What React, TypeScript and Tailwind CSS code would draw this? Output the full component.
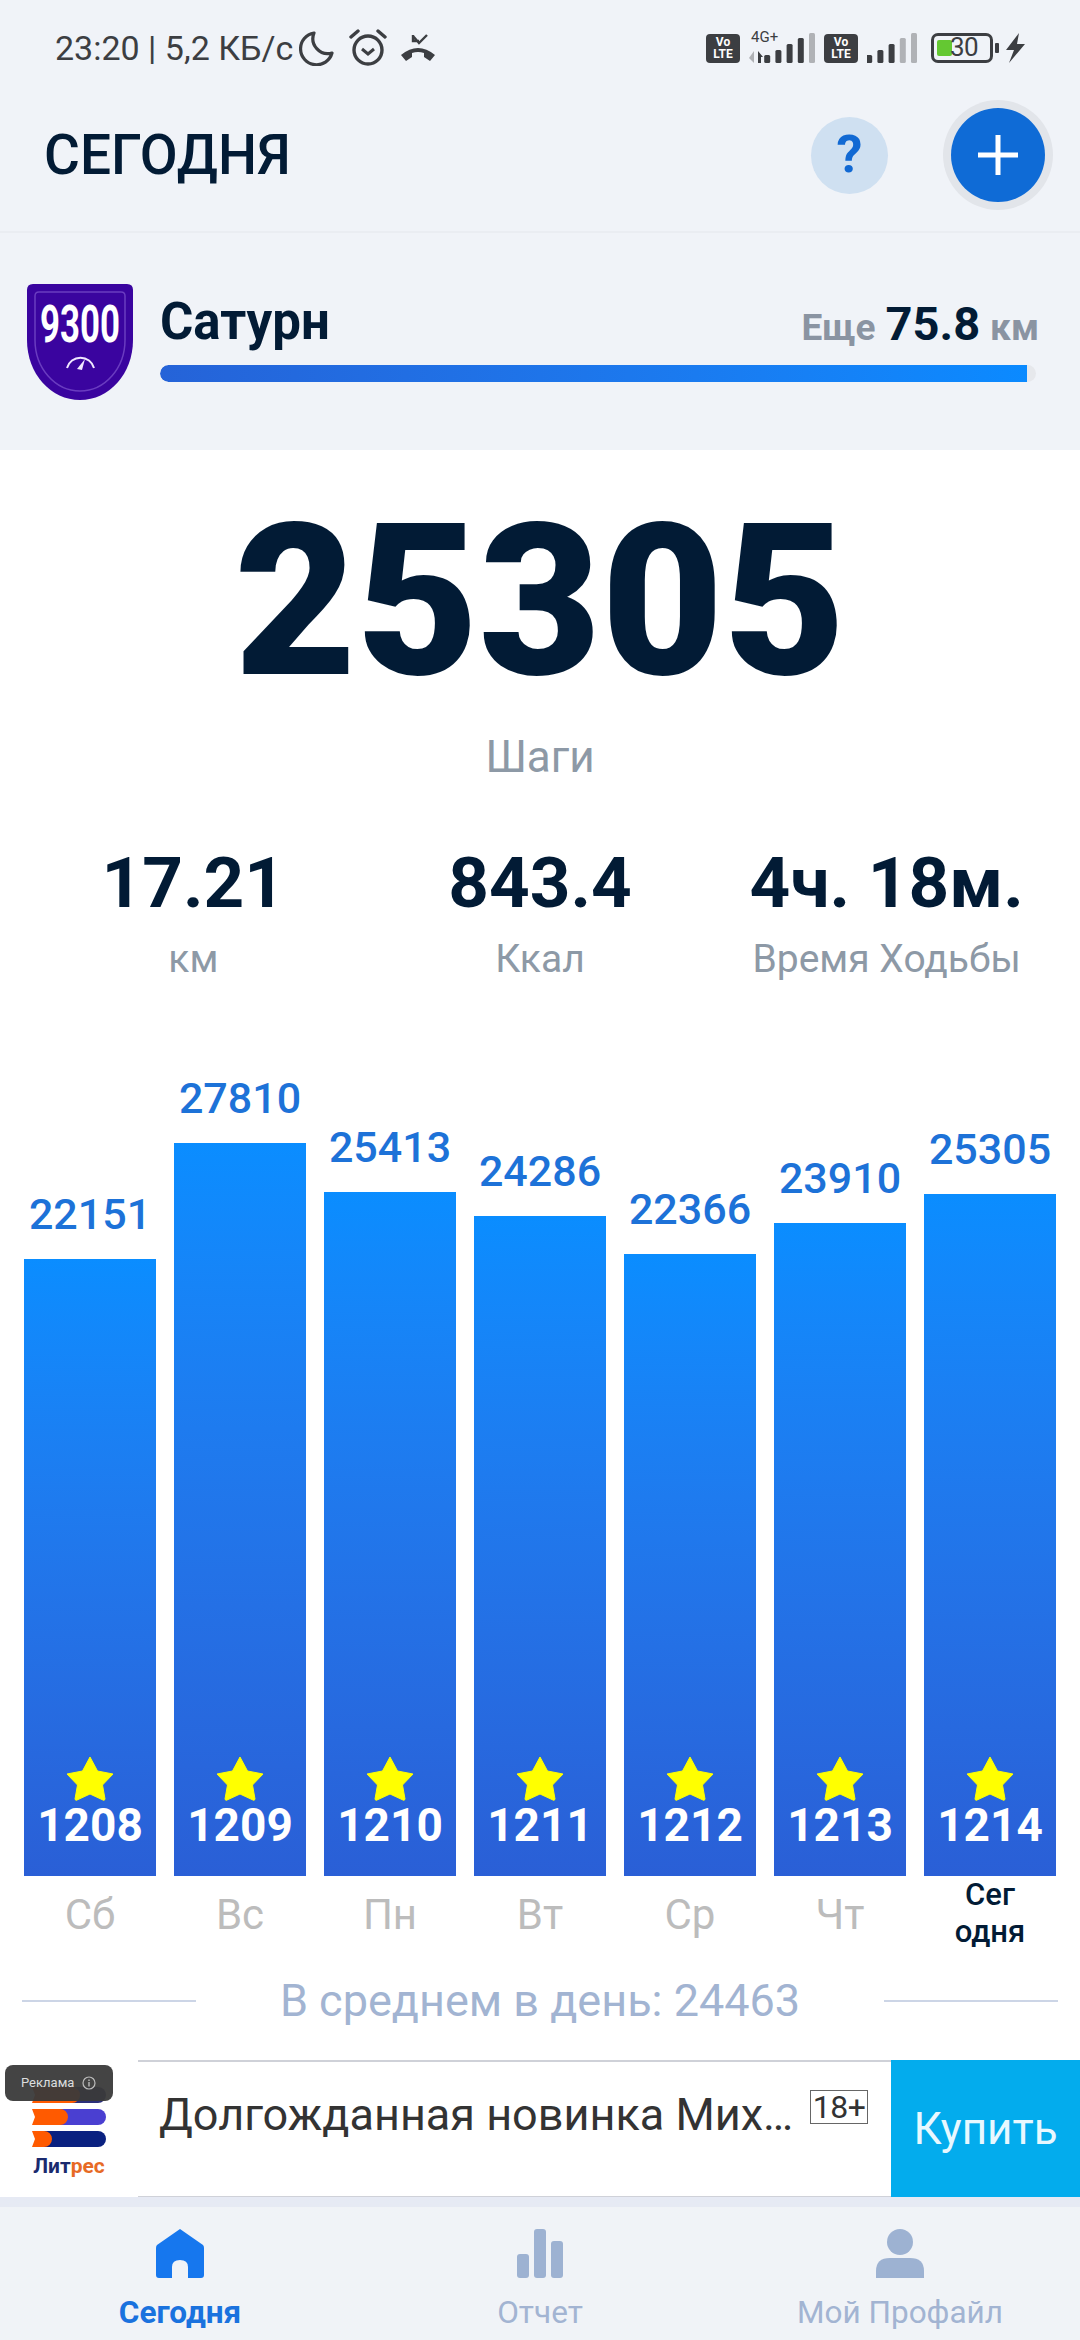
import React from "react";

const bars = [
  { v: 22151, n: 1208, d: "Сб", h: 617 },
  { v: 27810, n: 1209, d: "Вс", h: 733 },
  { v: 25413, n: 1210, d: "Пн", h: 684 },
  { v: 24286, n: 1211, d: "Вт", h: 660 },
  { v: 22366, n: 1212, d: "Ср", h: 622 },
  { v: 23910, n: 1213, d: "Чт", h: 653 },
  { v: 25305, n: 1214, d: "", h: 682 },
];

function Volte() {
  return (
    <div className="w-[34px] h-[29px] rounded-[4px] bg-[#3c3e42] text-white flex flex-col items-center justify-center font-bold text-[12px] leading-[12px] shrink-0">
      <span>Vo</span>
      <span>LTE</span>
    </div>
  );
}

function Signal({ lit, w }: { lit: number; w: number }) {
  const hs = [8, 13, 19, 25, 30];
  return (
    <svg width={w} height="30" viewBox={`0 0 ${w} 30`}>
      {hs.map((h, i) => (
        <rect key={i} x={w - 6 - (4 - i) * 11.2} y={30 - h} width="6" height={h} rx="1.5" fill={i < lit ? "#3c3e42" : "#b0b2b6"} />
      ))}
    </svg>
  );
}

function Star() {
  return (
    <svg width="48" height="44" viewBox="0 0 48 44" className="block">
      <path
        d="M24 0 L31.5 14 L47 17 L36.5 28 L39 42 Q38.5 44 37 43 L24 37 L11 43 Q9.5 44 9 42 L11.5 28 L1 17 L16.5 14 Z"
        fill="#ffff00"
        stroke="#ffff00"
        strokeWidth="1"
        strokeLinejoin="round"
      />
    </svg>
  );
}

export default function App() {
  return (
    <div className="w-[1080px] h-[2340px] overflow-hidden flex flex-col bg-[#f0f3f8] font-['Roboto',sans-serif]">
      {/* Status bar */}
      <div className="h-[96px] shrink-0 flex items-center pl-[55px] pr-[54px] text-[#3c3e42]">
        <span className="text-[34px] leading-none">23:20 | 5,2 КБ/с</span>
        <svg width="36" height="36" viewBox="0 0 36 36" className="ml-[6px]">
          <path d="M15 3 A16 16 0 1 0 33 23 A15 15 0 0 1 15 3 Z" fill="none" stroke="#3c3e42" strokeWidth="3.2" strokeLinejoin="round" />
        </svg>
        <svg width="40" height="38" viewBox="0 0 40 38" className="ml-[13px]">
          <circle cx="20" cy="21" r="14" fill="none" stroke="#3c3e42" strokeWidth="3.4" />
          <path d="M14 20 L20 25 L26 20" fill="none" stroke="#3c3e42" strokeWidth="3" />
          <path d="M3 8 L10 2 M37 8 L30 2" stroke="#3c3e42" strokeWidth="3.4" strokeLinecap="round" />
        </svg>
        <svg width="36" height="30" viewBox="0 0 36 30" className="ml-[12px]">
          <path d="M1 22 Q18 8 35 22 L30 28 L24 24 L24 20 Q18 18 12 20 L12 24 L6 28 Z" fill="#3c3e42" />
          <path d="M13 2 L13 8 L19 8 M13 3 L19 10 L27 2" fill="none" stroke="#3c3e42" strokeWidth="2.4" />
        </svg>
        <div className="ml-auto flex items-center">
          <Volte />
          <div className="relative ml-[9px]">
            <span className="absolute -top-[3px] left-[2px] text-[15px] leading-none">4G+</span>
            <div className="flex items-end h-[30px]">
              <svg width="14" height="12" viewBox="0 0 14 12">
                <path d="M5 0 L5 12 L0 7 Z" fill="#b0b2b6" />
                <path d="M9 0 L14 6 L9 6 Z M9 6 L12 6 L12 12 L9 12 Z" fill="#3c3e42" />
              </svg>
              <Signal lit={4} w={52} />
            </div>
          </div>
          <div className="ml-[9px]"><Volte /></div>
          <div className="ml-[9px]"><Signal lit={3} w={50} /></div>
          <div className="relative ml-[14px] w-[62px] h-[30px] rounded-[7px] border-[3.5px] border-[#3c3e42] flex items-center">
            <div className="ml-[3px] w-[15px] h-[16px] rounded-[2px] bg-[#64c832]" />
            <span className="absolute left-[16px] top-[0px] text-[26px] leading-[23px] tracking-[-0.5px]">30</span>
          </div>
          <div className="ml-[2px] w-[4px] h-[10px] rounded-[1px] bg-[#3c3e42]" />
          <svg width="20" height="30" viewBox="0 0 20 30" className="ml-[7px]">
            <path d="M13 0 L0 17 L8 17 L3 30 L19 11 L11 11 Z" fill="#3c3e42" />
          </svg>
        </div>
      </div>

      {/* Header */}
      <div className="h-[137px] shrink-0 flex items-center pl-[44px] border-b-[2px] border-[#eaedf2]">
        <span className="text-[55px] leading-none font-medium text-[#021b35] -mt-[16px]">СЕГОДНЯ</span>
        <div className="ml-auto flex items-center -mt-[17px] mr-[36px]">
          <div className="w-[77px] h-[77px] rounded-full bg-[#cfe0f1] flex items-center justify-center text-[#1169d3] text-[52px] font-bold leading-none">?</div>
          <div className="ml-[63px] -mr-[1px] w-[94px] h-[94px] rounded-full bg-[#0f6bd6] ring-[8px] ring-[#e2e5ea] flex items-center justify-center">
            <svg width="40" height="40" viewBox="0 0 40 40">
              <path d="M17.5 0 H22.5 V17.5 H40 V22.5 H22.5 V40 H17.5 V22.5 H0 V17.5 H17.5 Z" fill="#fff" />
            </svg>
          </div>
        </div>
      </div>

      {/* Goal */}
      <div className="h-[217px] shrink-0 flex items-start pt-[51px] pl-[27px] pr-[44px]">
        <svg width="106" height="116" viewBox="0 0 106 116" className="shrink-0">
          <path d="M6 0 H100 Q106 0 106 6 V56 C106 90 82 116 53 116 C24 116 0 90 0 56 V6 Q0 0 6 0 Z" fill="#3a049f" />
          <path d="M12 8 H94 Q98 8 98 12 V56 C98 84 78 107 53 107 C28 107 8 84 8 56 V12 Q8 8 12 8 Z" fill="none" stroke="#6a3cc0" strokeWidth="1.5" />
          <text x="53" y="58" textAnchor="middle" fontFamily="Roboto" fontWeight="700" fontSize="52" textLength="80" lengthAdjust="spacingAndGlyphs" fill="#fff">9300</text>
          <path d="M40 84 A14 14 0 0 1 67 84" fill="none" stroke="#f0e8ff" strokeWidth="2" />
          <path d="M50 85 L58 75 L55 86 Z" fill="#f0e8ff" />
        </svg>
        <div className="ml-[27px] flex-1 flex flex-col">
          <div className="flex items-end h-[63px] -mr-[3px]">
            <span className="text-[51px] leading-none font-bold text-[#021b35]">Сатурн</span>
            <span className="ml-auto flex items-baseline font-bold text-[#8a94a2] text-[37px] leading-none -mt-[2px]">
              Еще
              <span className="text-[#021b35] text-[47px] ml-[10px] mr-[10px]">75.8</span>
              км
            </span>
          </div>
          <div className="mt-[18px] h-[17px] rounded-full bg-[#e6e8ec] overflow-hidden">
            <div className="h-full w-[867px] rounded-l-full bg-gradient-to-r from-[#2563d8] to-[#0a8aff]" />
          </div>
        </div>
      </div>

      {/* Main */}
      <div className="h-[1610px] shrink-0 bg-white flex flex-col">
        <div className="mt-[47px] h-[210px] flex items-center justify-center text-[211px] leading-none font-black text-[#021b35]">25305</div>
        <div className="mt-[26px] text-center text-[44px] leading-[48px] text-[#8d99a6]">Шаги</div>
        <div className="mt-[62px] px-[20px] grid grid-cols-3 text-center">
          {[
            ["17.21", "км"],
            ["843.4", "Ккал"],
            ["4ч. 18м.", "Время Ходьбы"],
          ].map(([a, b]) => (
            <div key={b} className="flex flex-col items-center">
              <span className="text-[71px] leading-[80px] font-bold text-[#021b35]">{a}</span>
              <span className="text-[39px] leading-[44px] mt-[14px] text-[#8d99a6]">{b}</span>
            </div>
          ))}
        </div>

        <div className="mt-[55px] h-[840px] flex items-end pl-[24px] gap-[18px]">
          {bars.map((b) => (
            <div key={b.n} className="w-[132px] flex flex-col items-center">
              <span className="text-[43px] leading-[50px] mb-[20px] font-medium text-[#1d72d8]">{b.v}</span>
              <div
                className="w-full bg-gradient-to-b from-[#0a8dff] to-[#2a5fd6] flex flex-col items-center justify-end pb-[28px]"
                style={{ height: b.h }}
              >
                <Star />
                <span className="text-[46px] leading-[46px] font-bold text-white mt-[1px]">{b.n}</span>
              </div>
            </div>
          ))}
        </div>
        <div className="h-[74px] flex pl-[24px] gap-[18px]">
          {bars.map((b) => (
            <div key={b.n} className="w-[132px] flex flex-col items-center justify-center">
              {b.d ? (
                <span className="text-[42px] leading-none text-[#bcbcbc] mt-[4px]">{b.d}</span>
              ) : (
                <span className="text-[31px] leading-[37px] font-medium text-[#021b35] text-center">
                  Сег
                  <br />
                  одня
                </span>
              )}
            </div>
          ))}
        </div>
        <div className="mt-[26px] flex items-center px-[22px]">
          <div className="w-[174px] h-[2px] bg-[#ccd5e6]" />
          <span className="flex-1 text-center text-[45px] leading-[50px] text-[#a2b4d2]">В среднем в день: 24463</span>
          <div className="w-[174px] h-[2px] bg-[#ccd5e6]" />
        </div>
      </div>

      {/* Ad */}
      <div className="h-[137px] shrink-0 flex bg-white relative">
        <div className="absolute left-[5px] top-[5px] w-[108px] h-[36px] rounded-[8px] bg-[#3a3a3a]/95 z-10 flex items-center pl-[16px] text-[13px] text-[#dddddd]">
          Реклама
          <svg width="14" height="14" viewBox="0 0 14 14" className="ml-[8px]">
            <circle cx="7" cy="7" r="6" fill="none" stroke="#bbb" strokeWidth="1.2" />
            <path d="M7 6 V10.5 M7 3.5 V5" stroke="#bbb" strokeWidth="1.4" />
          </svg>
        </div>
        <div className="w-[138px] shrink-0 flex flex-col items-center pt-[27px]">
          <svg width="74" height="60" viewBox="0 0 74 60">
            <path d="M30 0 H66 a8 8 0 0 1 0 16 H30 Z" fill="#2b2f7a" />
            <path d="M0 0 H40 a8 8 0 0 1 0 16 H0 L3 8 Z" fill="#ff5a00" />
            <path d="M20 22 H66 a8 8 0 0 1 0 16 H20 Z" fill="#4a3fd1" />
            <path d="M0 22 H28 a8 8 0 0 1 0 16 H0 L3 30 Z" fill="#ff5a00" />
            <path d="M12 44 H66 a8 8 0 0 1 0 16 H12 Z" fill="#0a2180" />
            <path d="M0 44 H12 a8 8 0 0 1 0 16 H0 L3 52 Z" fill="#ff5a00" />
          </svg>
          <div className="mt-[6px] text-[21px] leading-[26px] font-bold">
            <span className="text-[#1a2a6e]">Лит</span>
            <span className="text-[#e76a25]">рес</span>
          </div>
        </div>
        <div className="flex-1 flex items-start border-t-[2px] border-b-[1px] border-[#cfd1d8] pl-[21px] relative">
          <span className="mt-[26px] text-[45px] leading-[54px] text-[#333333] whitespace-nowrap">Долгожданная новинка Мих…</span>
          <span className="absolute right-[23px] top-[28px] w-[58px] h-[34px] border-[1.5px] border-[#666] text-[32px] leading-[32px] text-[#333] text-center tracking-[-0.5px]">18+</span>
        </div>
        <div className="w-[189px] shrink-0 bg-[#03aced] flex items-center justify-center text-[44px] text-[#e8f8ff]">Купить</div>
      </div>

      {/* Divider */}
      <div className="h-[10px] shrink-0 bg-[#e6eaf4]" />

      {/* Bottom nav */}
      <div className="flex-1 grid grid-cols-3 bg-[#f0f3f7]">
        <div className="flex flex-col items-center pt-[22px]">
          <svg width="48" height="49" viewBox="0 0 48 49">
            <path d="M24 0 L47 16 Q48 17 48 19 V46 Q48 49 45 49 H32 V38 Q32 31 24 31 Q16 31 16 38 V49 H3 Q0 49 0 46 V19 Q0 17 1 16 Z" fill="#1677ee" />
          </svg>
          <span className="mt-[17px] text-[31.5px] leading-[36px] font-bold text-[#1a72de]">Сегодня</span>
        </div>
        <div className="flex flex-col items-center pt-[22px]">
          <svg width="46" height="49" viewBox="0 0 46 49">
            <rect x="0" y="25" width="12" height="24" rx="3" fill="#9db2d2" />
            <rect x="17" y="0" width="12" height="49" rx="3" fill="#9db2d2" />
            <rect x="34" y="12" width="12" height="37" rx="3" fill="#9db2d2" />
          </svg>
          <span className="mt-[17px] text-[31.5px] leading-[36px] text-[#a2b4d2]">Отчет</span>
        </div>
        <div className="flex flex-col items-center pt-[22px]">
          <svg width="48" height="49" viewBox="0 0 48 49">
            <circle cx="24" cy="13" r="13" fill="#9db2d2" />
            <path d="M14 29 H34 Q48 29 48 42 V49 H0 V42 Q0 29 14 29 Z" fill="#9db2d2" />
          </svg>
          <span className="mt-[17px] text-[31.5px] leading-[36px] text-[#a2b4d2]">Мой Профайл</span>
        </div>
      </div>
    </div>
  );
}
